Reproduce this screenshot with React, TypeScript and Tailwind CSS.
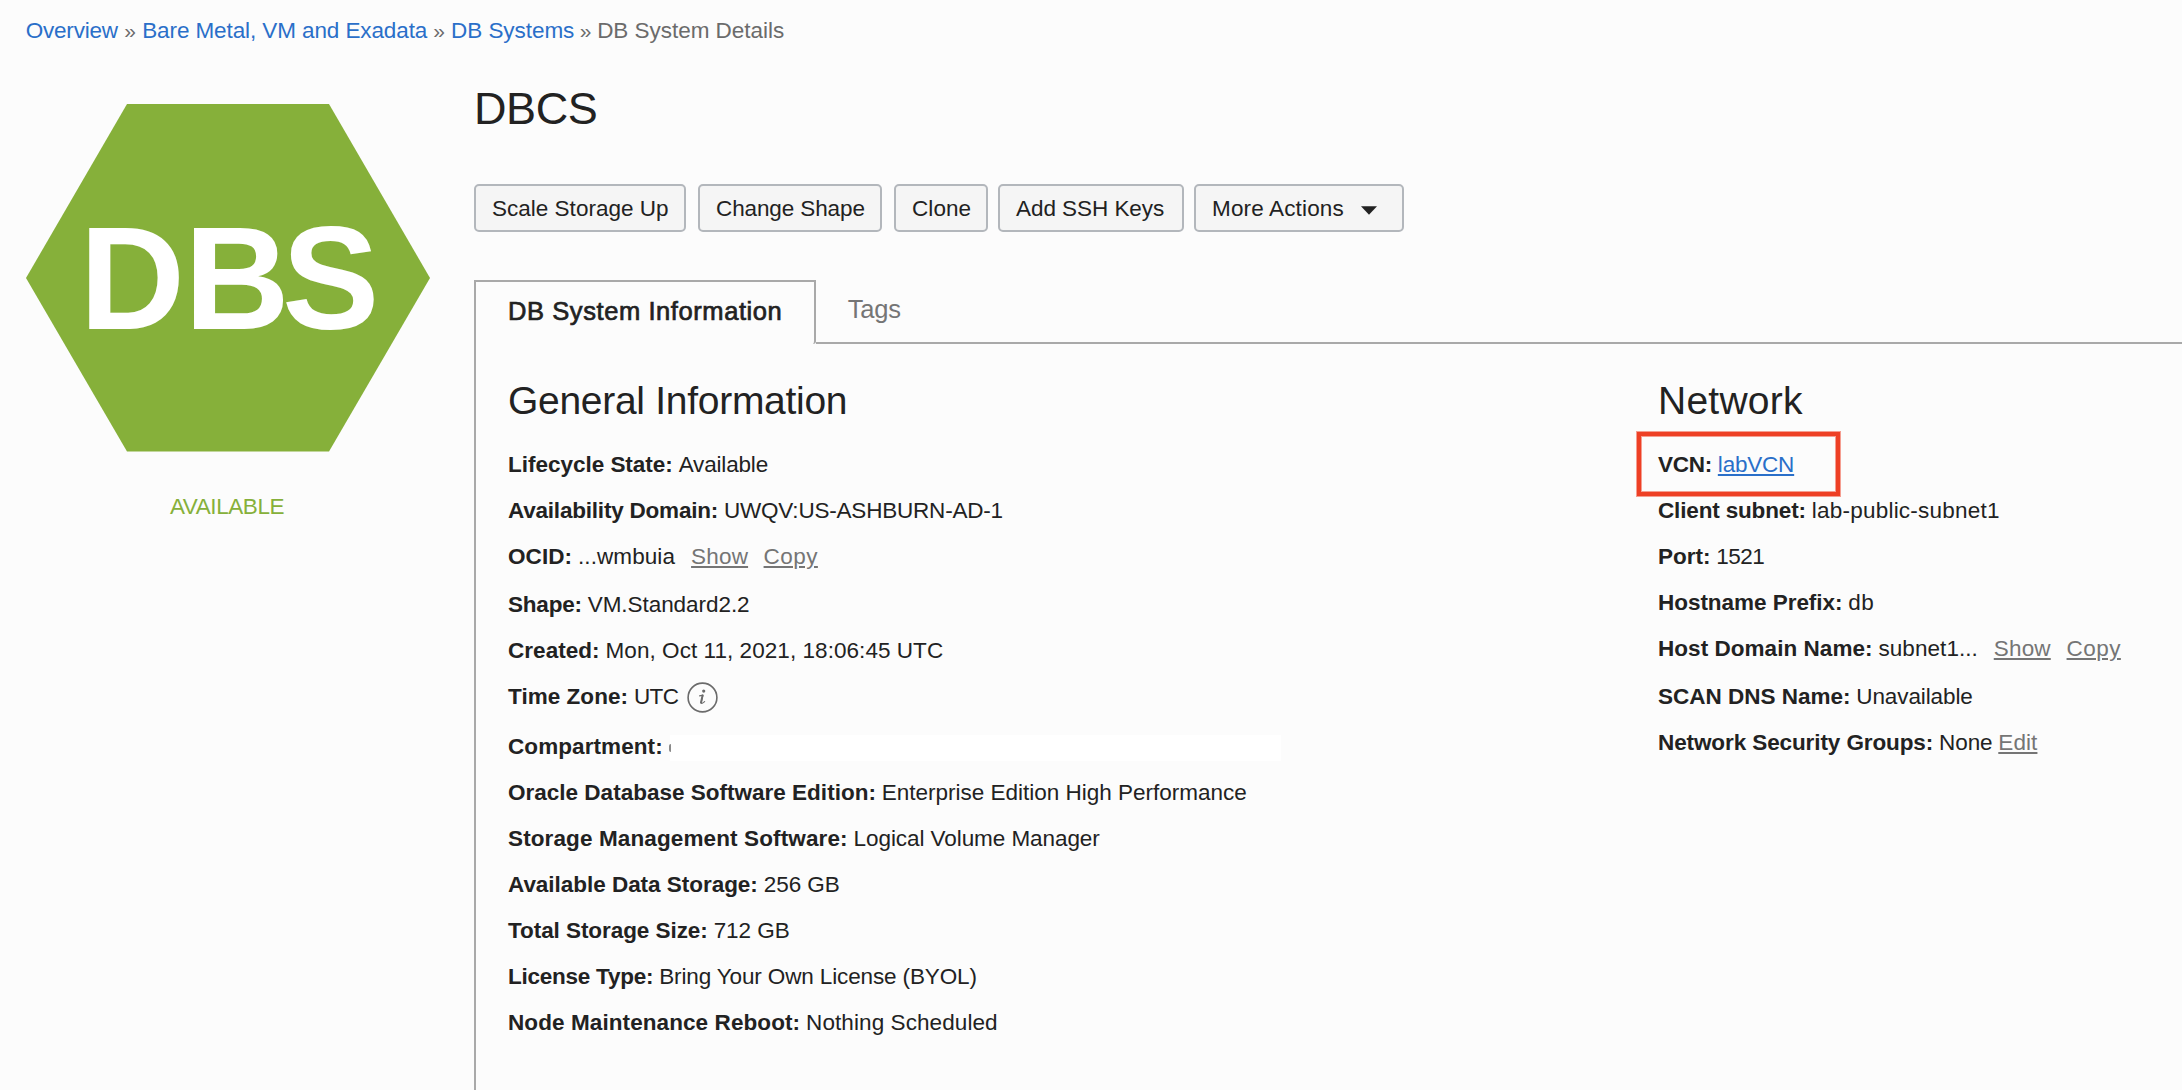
import type { ReactNode } from "react";

type Field = {
  label: string;
  labelClass: string;
  value?: string;
  valueClass?: string;
  rowClass?: string;
  extra?: ReactNode;
};

const mutedLink =
  "text-[#757575] underline decoration-2 underline-offset-[2px]";

function InfoIcon() {
  return (
    <svg
      className="ml-[8.5px] mt-[1px] h-[31px] w-[31px]"
      viewBox="0 0 31 31"
      fill="none"
    >
      <circle cx="15.5" cy="15.5" r="14.4" stroke="#6b6b6b" strokeWidth="1.6" />
      <circle cx="16.7" cy="9.1" r="1.6" fill="#6b6b6b" />
      <path
        d="M12.6 13.9 L16 13.2 L14.2 20.4 C14 21.8 15 21.9 17.6 19.6"
        stroke="#6b6b6b"
        strokeWidth="1.2"
        strokeLinecap="round"
        strokeLinejoin="round"
      />
      <path d="M15.5 13.6 L14 20.6" stroke="#6b6b6b" strokeWidth="2" strokeLinecap="round" />
    </svg>
  );
}

const general: Field[] = [
  { label: "Lifecycle State:", labelClass: "tracking-[-0.018px]", value: "Available", valueClass: "tracking-[-0.173px]" },
  { label: "Availability Domain:", labelClass: "tracking-[-0.206px]", value: "UWQV:US-ASHBURN-AD-1", valueClass: "tracking-[-0.2px]" },
  {
    label: "OCID:",
    labelClass: "tracking-[0.063px]",
    value: "...wmbuia",
    valueClass: "tracking-[0.091px]",
    rowClass: "mb-[2px]",
    extra: (
      <>
        <a className={`ml-[16px] tracking-[0.18px] ${mutedLink}`}>Show</a>
        <a className={`ml-[15.5px] tracking-[0.44px] ${mutedLink}`}>Copy</a>
      </>
    ),
  },
  { label: "Shape:", labelClass: "tracking-[-0.204px]", value: "VM.Standard2.2", valueClass: "tracking-[-0.05px]" },
  { label: "Created:", labelClass: "tracking-[0.045px]", value: "Mon, Oct 11, 2021, 18:06:45 UTC", valueClass: "tracking-[0.054px]" },
  { label: "Time Zone:", labelClass: "tracking-[0.044px]", value: "UTC", valueClass: "tracking-[-0.6px]", rowClass: "mb-[4px]", extra: <InfoIcon /> },
  {
    label: "Compartment:",
    labelClass: "tracking-[0.085px]",
    extra: (
      <span className="-mb-[1px] ml-[7px] flex h-[26px] w-[611px] items-center bg-white">
        <span className="-ml-px h-[8px] w-[2px] rounded-l-full bg-[#8a8a8a]" />
      </span>
    ),
  },
  { label: "Oracle Database Software Edition:", labelClass: "tracking-[0.009px]", value: "Enterprise Edition High Performance", valueClass: "tracking-[-0.005px]" },
  { label: "Storage Management Software:", labelClass: "tracking-[0.12px]", value: "Logical Volume Manager", valueClass: "tracking-[-0.07px]" },
  { label: "Available Data Storage:", labelClass: "tracking-[-0.03px]", value: "256 GB", valueClass: "tracking-[-0.05px]" },
  { label: "Total Storage Size:", labelClass: "tracking-[-0.06px]", value: "712 GB", valueClass: "tracking-[-0.05px]" },
  { label: "License Type:", labelClass: "tracking-[-0.241px]", value: "Bring Your Own License (BYOL)", valueClass: "tracking-[-0.13px]" },
  { label: "Node Maintenance Reboot:", labelClass: "tracking-[0.09px]", value: "Nothing Scheduled", valueClass: "tracking-[0.086px]" },
];

const network: Field[] = [
  {
    label: "VCN:",
    labelClass: "tracking-[-0.268px]",
    extra: (
      <a className="ml-[5.9px] tracking-[-0.2px] text-[#2a6fc9] underline decoration-2 underline-offset-[2px]">
        labVCN
      </a>
    ),
  },
  { label: "Client subnet:", labelClass: "tracking-[-0.154px]", value: "lab-public-subnet1", valueClass: "tracking-[0.23px]" },
  { label: "Port:", labelClass: "tracking-[-0.025px]", value: "1521", valueClass: "tracking-[-0.5px]" },
  { label: "Hostname Prefix:", labelClass: "tracking-[-0.037px]", value: "db", valueClass: "tracking-[0.3px]" },
  {
    label: "Host Domain Name:",
    labelClass: "tracking-[0.044px]",
    value: "subnet1...",
    valueClass: "tracking-[0.07px]",
    rowClass: "mb-[2px]",
    extra: (
      <>
        <a className={`ml-[15.8px] tracking-[0.18px] ${mutedLink}`}>Show</a>
        <a className={`ml-[15.8px] tracking-[0.44px] ${mutedLink}`}>Copy</a>
      </>
    ),
  },
  { label: "SCAN DNS Name:", labelClass: "tracking-[-0.011px]", value: "Unavailable", valueClass: "tracking-[-0.106px]" },
  {
    label: "Network Security Groups:",
    labelClass: "tracking-[-0.099px]",
    value: "None",
    valueClass: "tracking-[-0.092px]",
    extra: <a className={`ml-[5.8px] tracking-[0.09px] ${mutedLink}`}>Edit</a>,
  },
];

function FieldRow({ field }: { field: Field }) {
  return (
    <div
      className={`flex h-[46px] items-center whitespace-nowrap text-[22.5px] leading-[46px] ${field.rowClass ?? ""}`}
    >
      <span className={`font-bold ${field.labelClass}`}>{field.label}</span>
      {field.value && (
        <span className={`ml-[5.9px] ${field.valueClass}`}>{field.value}</span>
      )}
      {field.extra}
    </div>
  );
}

function Button({ className, children }: { className: string; children: ReactNode }) {
  return (
    <button
      className={`flex h-12 items-center whitespace-nowrap rounded-[5px] border-2 border-[#b3b7bc] bg-[#f5f5f5] pl-[16px] pt-[2px] text-[22.5px] ${className}`}
    >
      {children}
    </button>
  );
}

export default function App() {
  return (
    <div className="flex h-[1090px] w-[2182px] flex-col overflow-hidden bg-[#fcfcfc] font-['Liberation_Sans',Arial,sans-serif] text-[#222222]">
      <nav className="flex h-[60px] shrink-0 items-center whitespace-nowrap pl-[25.7px] pt-[2px] text-[22.5px] text-[#6b6b6b]">
        <a className="tracking-[-0.2px] text-[#2a6fc9]">Overview</a>
        <span className="w-[24.3px] text-center text-[21px]">»</span>
        <a className="tracking-[-0.098px] text-[#2a6fc9]">Bare Metal, VM and Exadata</a>
        <span className="w-[23.8px] text-center text-[21px]">»</span>
        <a className="tracking-[-0.058px] text-[#2a6fc9]">DB Systems</a>
        <span className="w-[22.9px] text-center text-[21px]">»</span>
        <span className="tracking-[-0.031px]">DB System Details</span>
      </nav>

      <div className="flex flex-1">
        <aside className="flex w-[474px] shrink-0 flex-col pl-[26px] pt-[44px]">
          <svg className="h-[348px] w-[404px]" viewBox="0 0 404 348">
            <path d="M101 0H303L404 174L303 347.6H101L0 174Z" fill="#86b03a" />
            <text
              x="53.5 158.3 256"
              y="224.7"
              fill="#ffffff"
              fontFamily="Liberation Sans, Arial, sans-serif"
              fontWeight="bold"
              fontSize="146"
            >
              DBS
            </text>
          </svg>
          <div className="mt-[40px] w-[402px] text-center text-[22.5px] leading-[30px] tracking-[-0.42px] text-[#86b03a]">
            AVAILABLE
          </div>
        </aside>

        <main className="flex w-[1708px] shrink-0 flex-col">
          <h1 className="mt-[23px] h-[51px] text-[45px] leading-[52px] tracking-[-0.4px]">
            DBCS
          </h1>
          <div className="mt-[50px] flex">
            <Button className="w-[212px] tracking-[0.011px]">Scale Storage Up</Button>
            <Button className="ml-[12px] w-[184px] tracking-[-0.11px]">Change Shape</Button>
            <Button className="ml-[12px] w-[94px] tracking-[0.08px]">Clone</Button>
            <Button className="ml-[10px] w-[186px] tracking-[-0.05px]">Add SSH Keys</Button>
            <Button className="ml-[10px] w-[210px] tracking-[0.15px]">
              More Actions
              <svg className="ml-[17px] mt-[3px] h-[9px] w-[16px]" viewBox="0 0 16 9">
                <path d="M0 0.3H16L8 8.7Z" fill="#222222" />
              </svg>
            </Button>
          </div>

          <div className="mt-[48px] flex h-[64px]">
            <div className="w-[342px] rounded-br-[3px] border-2 border-b-0 border-[#a9a9a9] pl-[32px] text-[25.5px] leading-[59px] tracking-[0.58px] [-webkit-text-stroke:0.7px_#222222]">
              DB System Information
            </div>
            <div className="flex-1 border-b-2 border-[#a9a9a9] pl-[31.8px] text-[25.5px] leading-[59px] tracking-[-0.2px] text-[#757575]">
              Tags
            </div>
          </div>

          <div className="flex flex-1 border-l-2 border-[#a9a9a9]">
            <section className="w-[1150px] pl-[32px]">
              <h2 className="mt-[34px] h-[46px] text-[39px] leading-[46px] tracking-[-0.288px]">
                General Information
              </h2>
              <div className="mt-[18px]">
                {general.map((f) => (
                  <FieldRow key={f.label} field={f} />
                ))}
              </div>
            </section>
            <section className="relative pl-[32px]">
              <h2 className="mt-[34px] h-[46px] text-[39px] leading-[46px] tracking-[0.25px]">
                Network
              </h2>
              <div className="mt-[18px]">
                {network.map((f) => (
                  <FieldRow key={f.label} field={f} />
                ))}
              </div>
              <div className="absolute left-[11px] top-[88px] h-[64px] w-[203px] border-4 border-[#ee4025] shadow-[0_0_0_1px_rgba(238,64,37,0.5),inset_0_0_0_1px_rgba(238,64,37,0.5)]" />
            </section>
          </div>
        </main>
      </div>
    </div>
  );
}
